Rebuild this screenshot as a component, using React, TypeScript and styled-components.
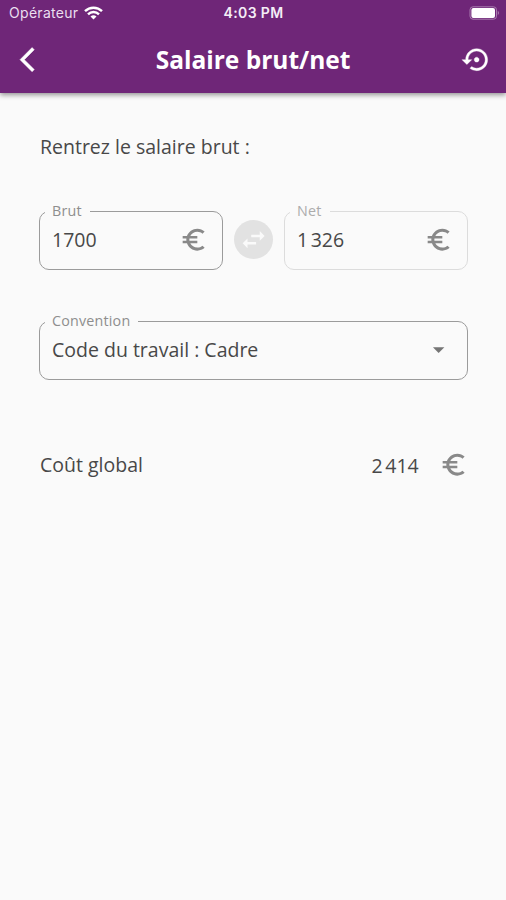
import React from "react";
import styled, { createGlobalStyle } from "styled-components";

const GlobalStyle = createGlobalStyle`
  * { box-sizing: border-box; }
  body { margin: 0; background: #fafafa; font-family: "Open Sans", sans-serif; }
`;

const Screen = styled.div`
  width: 506px;
  height: 900px;
  display: flex;
  flex-direction: column;
  overflow: hidden;
  background: #fafafa;
  color: #484848;
`;

const Header = styled.header`
  height: 93px;
  flex: none;
  background: #6f2678;
  color: #fff;
  box-shadow: 0 2px 5px rgba(0, 0, 0, 0.42);
`;

const StatusBar = styled.div`
  height: 26px;
  padding: 0 6px 0 9px;
  display: grid;
  grid-template-columns: 1fr auto 1fr;
  align-items: center;
  font-family: Inter, sans-serif;
  font-size: 14px;
  line-height: 26px;
`;

const Carrier = styled.div`
  display: flex;
  align-items: center;
  gap: 6px;
  color: #eadff0;
  letter-spacing: 0.3px;
`;

const Clock = styled.div`
  margin-right: 2px;
  font-size: 14px;
  font-weight: 600;
  letter-spacing: 0.35px;
  color: #f4edf6;
`;

const Battery = styled.svg`
  justify-self: end;
`;

const TitleBar = styled.div`
  height: 67px;
  padding: 0 15px 0 20px;
  display: grid;
  grid-template-columns: 29px 1fr 29px;
  align-items: center;
`;

const Title = styled.h1`
  margin: 0 5px 0 0;
  text-align: center;
  font-size: 24.5px;
  line-height: 32px;
  font-weight: 700;
`;

const Icon = styled.svg<{ $color?: string; $stroke?: number }>`
  display: block;
  flex: none;
  width: 29.3px;
  height: 29.3px;
  overflow: visible;
  fill: ${(p) => p.$color ?? "#fff"};
  stroke: ${(p) => p.$color ?? "#fff"};
  stroke-width: ${(p) => p.$stroke ?? 0};
  stroke-linejoin: round;
`;

const Content = styled.main`
  padding: 37px 38px 0 39px;
  display: flex;
  flex-direction: column;
  font-size: 19.5px;
`;

const Prompt = styled.p`
  margin: 0 0 39px 1px;
  height: 32px;
  padding-top: 1px;
  line-height: 32px;
`;

const AmountRow = styled.div`
  display: flex;
  align-items: flex-start;
  gap: 11px;
`;

const Field = styled.fieldset<{ $color: string; $grow?: boolean }>`
  margin: 0;
  min-width: 0;
  width: ${(p) => (p.$grow ? "100%" : "184px")};
  height: 69px;
  padding: 0 14px 0 12px;
  border: 1px solid ${(p) => p.$color};
  border-radius: 10px;
`;

const Legend = styled.legend<{ $color: string }>`
  margin-left: -7px;
  padding: 0 8px 0 7px;
  height: 20px;
  line-height: 20px;
  font-size: 14.3px;
  letter-spacing: 0.2px;
  color: ${(p) => p.$color};
`;

const FieldBody = styled.div`
  height: 38px;
  display: flex;
  align-items: center;
  justify-content: space-between;
`;

const Value = styled.span`
  padding-bottom: 2px;
`;

const SwapButton = styled.button`
  width: 39px;
  height: 39px;
  margin-top: 19px;
  padding: 0;
  flex: none;
  display: grid;
  place-items: center;
  border: 0;
  border-radius: 50%;
  background: #e2e2e2;
`;

const Convention = styled.div`
  margin-top: 41px;
`;

const TotalRow = styled.div`
  margin: 69px 0 0 1px;
  height: 32px;
  display: flex;
  align-items: center;
`;

const TotalLabel = styled.span`
  flex: 1;
  padding-bottom: 2px;
`;

const TotalValue = styled.span`
  margin-right: 20px;
`;

const BACK = "M11.67 3.87 9.9 2.1 0 12l9.9 9.9 1.77-1.77L3.54 12z";
const RESTORE =
  "M14 12c0-1.1-.9-2-2-2s-2 .9-2 2 .9 2 2 2 2-.9 2-2zm-2-9c-4.97 0-9 4.03-9 9H0l4 4 4-4H5c0-3.87 3.13-7 7-7s7 3.13 7 7-3.13 7-7 7c-1.51 0-2.91-.49-4.06-1.3l-1.42 1.44C8.04 20.3 9.94 21 12 21c4.97 0 9-4.03 9-9s-4.03-9-9-9z";
const EURO =
  "M15 18.5c-2.51 0-4.68-1.42-5.76-3.5H15v-2H8.58c-.05-.33-.08-.66-.08-1s.03-.67.08-1H15V9H9.24C10.32 6.92 12.5 5.5 15 5.5c1.61 0 3.09.59 4.23 1.57L21 5.3C19.41 3.87 17.3 3 15 3c-3.92 0-7.24 2.51-8.48 6H3v2h3.06c-.04.33-.06.66-.06 1s.02.67.06 1H3v2h3.52c1.24 3.49 4.56 6 8.48 6 2.31 0 4.41-.87 6-2.3l-1.78-1.77c-1.13.98-2.6 1.57-4.22 1.57z";
const SWAP =
  "M6.99 11L3 15l3.99 4v-3H14v-2H6.99v-3zM21 9l-3.99-4v3H10v2h7.01v3L21 9z";
const DROPDOWN = "M7.3 10l4.7 4.8 4.7-4.8z";

type GlyphProps = { d: string; color?: string; stroke?: number };

const Glyph = ({ d, color, stroke }: GlyphProps) => (
  <Icon viewBox="0 0 24 24" $color={color} $stroke={stroke} aria-hidden="true">
    <path d={d} />
  </Icon>
);

export default function App() {
  return (
    <Screen>
      <GlobalStyle />
      <Header>
        <StatusBar>
          <Carrier>
            Opérateur
            <svg width="19" height="14" viewBox="0 0 19 14" fill="none" stroke="#fff" strokeWidth="2.4">
              <path d="M1 5.2a12.2 12.2 0 0 1 17 0" />
              <path d="M4 8.3a7.8 7.8 0 0 1 11 0" />
              <path d="M9.5 13.6 6.5 10.6a4.4 4.4 0 0 1 6 0z" fill="#fff" stroke="none" />
            </svg>
          </Carrier>
          <Clock>4:03 PM</Clock>
          <Battery width="31" height="14" viewBox="0 0 31 14">
            <rect x="1" y="0.8" width="26.5" height="12.4" rx="3" fill="none" stroke="#a87bae" />
            <rect x="2.4" y="2" width="23.6" height="10" rx="2" fill="#fff" />
            <path d="M28.8 4.8q2 2.2 0 4.4z" fill="#b58cba" />
          </Battery>
        </StatusBar>
        <TitleBar>
          <Glyph d={BACK} stroke={0.4} />
          <Title>Salaire brut/net</Title>
          <Glyph d={RESTORE} stroke={0.3} />
        </TitleBar>
      </Header>
      <Content>
        <Prompt>Rentrez le salaire brut :</Prompt>
        <AmountRow>
          <Field $color="#9b9b9b">
            <Legend $color="#8e8e8e">Brut</Legend>
            <FieldBody>
              <Value>1700</Value>
              <Glyph d={EURO} color="#898989" />
            </FieldBody>
          </Field>
          <SwapButton aria-label="Inverser">
            <Glyph d={SWAP} color="#fafafa" />
          </SwapButton>
          <Field $color="#dcdcdc">
            <Legend $color="#acacac">Net</Legend>
            <FieldBody>
              <Value>1{"\u202f"}326</Value>
              <Glyph d={EURO} color="#898989" />
            </FieldBody>
          </Field>
        </AmountRow>
        <Convention>
          <Field $color="#9b9b9b" $grow>
            <Legend $color="#8e8e8e">Convention</Legend>
            <FieldBody>
              <Value>Code du travail : Cadre</Value>
              <Glyph d={DROPDOWN} color="#757575" />
            </FieldBody>
          </Field>
        </Convention>
        <TotalRow>
          <TotalLabel>Coût global</TotalLabel>
          <TotalValue>2{"\u202f"}414</TotalValue>
          <Glyph d={EURO} color="#898989" />
        </TotalRow>
      </Content>
    </Screen>
  );
}
